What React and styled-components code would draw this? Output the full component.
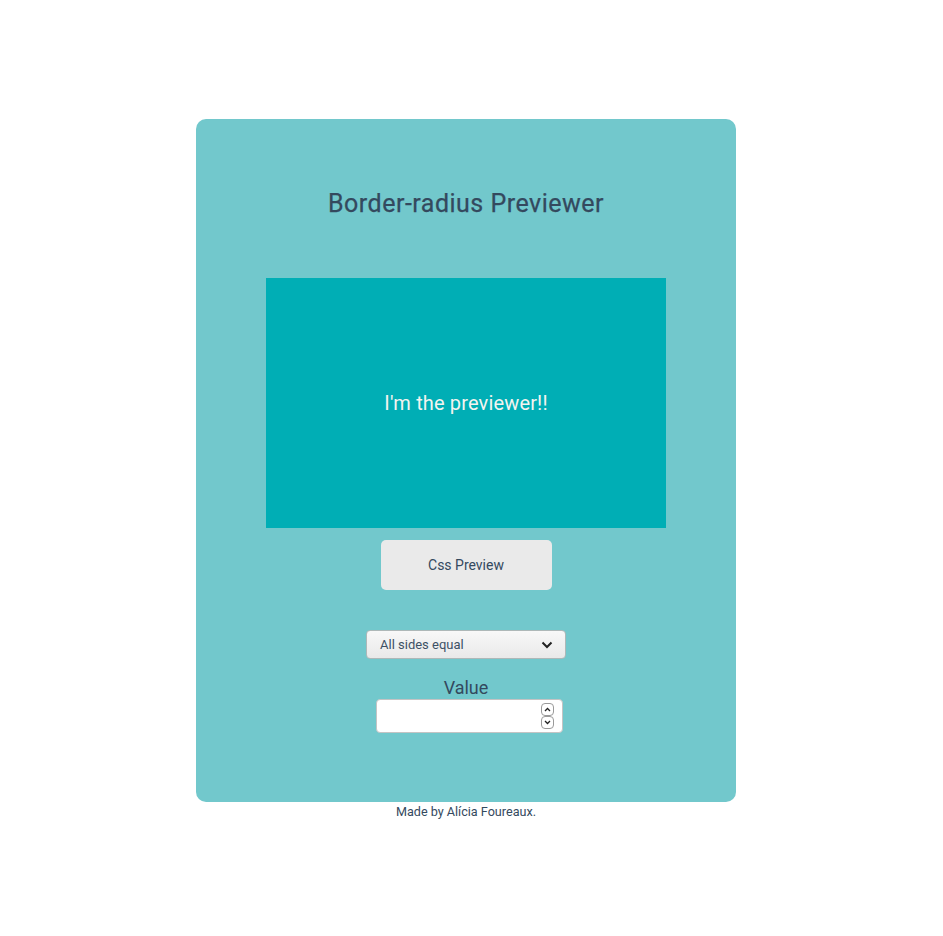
import React from 'react'
import styled, { createGlobalStyle } from 'styled-components'

const Global = createGlobalStyle`
  body {
    margin: 0;
    background: #ffffff;
    font-family: Roboto, "Liberation Sans", sans-serif;
    color: #34495e;
  }
`;

const Page = styled.div`
  display: flex;
  flex-direction: column;
  align-items: center;
  padding: 119px 11px 0 0;
`;

const Card = styled.main`
  width: 540px;
  height: 683px;
  box-sizing: border-box;
  background: #72c8cc;
  border-radius: 10px;
  display: flex;
  flex-direction: column;
  align-items: center;
  padding-top: 71px;
`;

const Title = styled.h1`
  margin: 0;
  font-size: 25px;
  font-weight: 400;
  line-height: 28px;
  letter-spacing: 0.5px;
  color: #34495e;
  -webkit-text-stroke: 0.25px #34495e;
`;

const Previewer = styled.div`
  margin-top: 60px;
  width: 400px;
  height: 250px;
  background: #00aeb5;
  display: flex;
  align-items: center;
  justify-content: center;
  color: #f4f4f0;
  font-size: 20px;
  letter-spacing: 0.15px;
`;

const CssButton = styled.button`
  margin-top: 12px;
  width: 171px;
  height: 50px;
  border: none;
  border-radius: 5px;
  background: #eaeaea;
  color: #34495e;
  font-family: Roboto, "Liberation Sans", sans-serif;
  font-size: 14px;
`;

const Select = styled.div`
  margin-top: 40px;
  width: 200px;
  height: 29px;
  box-sizing: border-box;
  border: 1px solid #aeb8b8;
  border-radius: 4px;
  background: linear-gradient(to bottom, #f8f8f8, #e9e9e9);
  display: flex;
  align-items: center;
  justify-content: space-between;
  padding: 0 12px 0 13px;
  font-size: 13px;
  color: #3d5166;
`;

const Label = styled.label`
  margin-top: 19px;
  font-size: 18px;
  line-height: 20px;
`;

const NumberBox = styled.div`
  margin: 1px 0 0 6px;
  width: 187px;
  height: 34px;
  box-sizing: border-box;
  border: 1px solid #c4c4c4;
  border-radius: 4px;
  background: #ffffff;
  display: flex;
  align-items: center;
  padding-right: 8px;
`;

const NumberInput = styled.input`
  flex: 1;
  min-width: 0;
  border: none;
  outline: none;
  background: transparent;
  font-size: 14px;
  padding: 0 8px;
`;

const Spinner = styled.div`
  display: flex;
  flex-direction: column;
`;

const SpinButton = styled.div`
  width: 11px;
  height: 11px;
  border: 1px solid #9a9a9a;
  border-radius: 4px;
  display: flex;
  align-items: center;
  justify-content: center;
  background: #fff;
`;

const Footer = styled.p`
  margin: 2px 0 0;
  font-size: 12.6px;
  line-height: 16px;
  color: #34495e;
`;

const Chevron = ({ up }) => (
  <svg width="7" height="5" viewBox="0 0 7 5">
    <path
      d={up ? 'M1 4 L3.5 1.5 L6 4' : 'M1 1 L3.5 3.5 L6 1'}
      fill="none"
      stroke="#222"
      strokeWidth="1.3"
    />
  </svg>
)

export default function App() {
  return (
    <>
      <Global />
      <Page>
        <Card>
          <Title>Border-radius Previewer</Title>
          <Previewer>I'm the previewer!!</Previewer>
          <CssButton>Css Preview</CssButton>
          <Select>
            <span>All sides equal</span>
            <svg width="12" height="8" viewBox="0 0 12 8">
              <path d="M1.5 1.5 L6 6 L10.5 1.5" fill="none" stroke="#222" strokeWidth="2" />
            </svg>
          </Select>
          <Label htmlFor="value">Value</Label>
          <NumberBox>
            <NumberInput id="value" type="text" />
            <Spinner>
              <SpinButton><Chevron up /></SpinButton>
              <SpinButton><Chevron /></SpinButton>
            </Spinner>
          </NumberBox>
        </Card>
        <Footer>Made by Alícia Foureaux.</Footer>
      </Page>
    </>
  )
}
